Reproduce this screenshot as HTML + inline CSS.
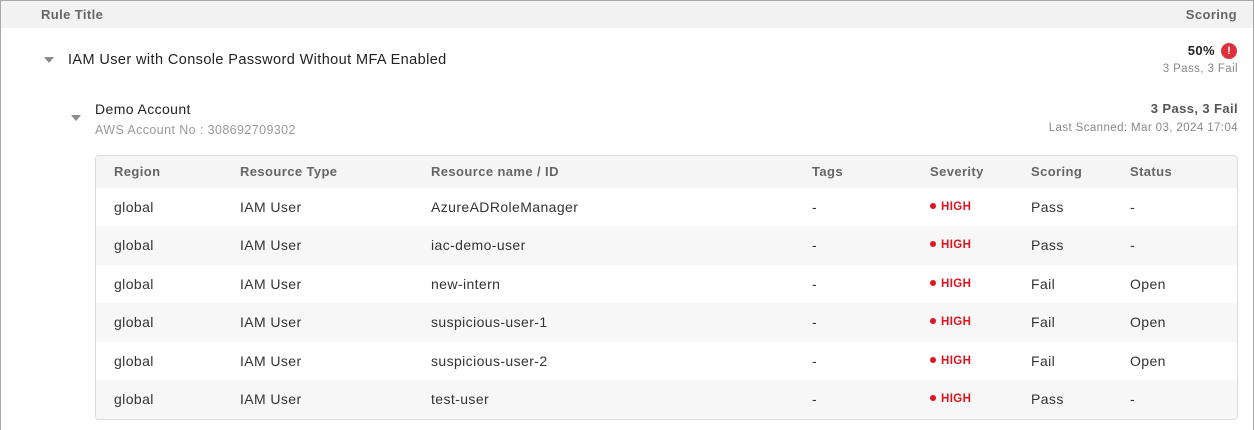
<!DOCTYPE html>
<html><head><style>
*{box-sizing:border-box;margin:0;padding:0}
body{width:1255px;height:430px;background:#fff;font-family:"Liberation Sans",sans-serif;color:#333;position:relative;overflow:hidden;letter-spacing:0.4px}
.frame{position:absolute;left:0;top:0;width:1254px;height:430px;border:1px solid #a8a8a8;border-bottom:none}
.hdr{position:absolute;left:1px;top:1px;width:1252px;height:27px;background:#f2f2f2}
.t{position:absolute;white-space:nowrap}
.tri{position:absolute;width:0;height:0;border-left:5px solid transparent;border-right:5px solid transparent;border-top:6px solid #8a8a8a}
.tbl{position:absolute;left:95px;top:155px;width:1143px;height:265px;border:1px solid #ddd;border-radius:4px;overflow:hidden}
.row{position:absolute;left:0;width:1141px;font-size:14px;color:#333}
.row span{position:absolute;white-space:nowrap}
.hi{color:#e0141e;font-weight:bold;font-size:11.5px}
.hi:before{content:"";display:inline-block;width:6px;height:6px;border-radius:50%;background:#e0141e;margin-right:5px;vertical-align:1px}
</style></head><body>
<div class="frame"></div>
<div class="hdr"></div>
<div class="t" style="left:41px;top:7px;font-size:13px;font-weight:bold;color:#666">Rule Title</div>
<div class="t" style="right:18px;top:7px;font-size:13px;font-weight:bold;color:#666">Scoring</div>
<div class="tri" style="left:44px;top:57px"></div>
<div class="t" style="left:68px;top:52px;font-size:14.5px;color:#222">IAM User with Console Password Without MFA Enabled</div>
<div class="t" style="right:40px;top:43px;font-size:13px;font-weight:bold;color:#222">50%</div>
<div style="position:absolute;left:1221px;top:43px;width:16px;height:16px;border-radius:50%;background:#e0303c;color:#fff;font-size:11px;font-weight:bold;text-align:center;line-height:16px;letter-spacing:0">!</div>
<div class="t" style="right:17px;top:63px;font-size:11.5px;color:#888">3 Pass, 3 Fail</div>
<div class="tri" style="left:71px;top:115px"></div>
<div class="t" style="left:95px;top:101px;font-size:14px;color:#222">Demo Account</div>
<div class="t" style="left:95px;top:123px;font-size:12.5px;color:#999">AWS Account No : 308692709302</div>
<div class="t" style="right:17px;top:101px;font-size:13px;font-weight:bold;color:#555">3 Pass, 3 Fail</div>
<div class="t" style="right:17px;top:122px;font-size:11.5px;color:#888">Last Scanned: Mar 03, 2024 17:04</div>
<div class="tbl">
<div class="row" style="top:0;height:32px;background:#f5f5f5;color:#666;font-weight:bold;font-size:13px"><span style="left:18px;top:8px">Region</span><span style="left:144px;top:8px">Resource Type</span><span style="left:335px;top:8px">Resource name / ID</span><span style="left:716px;top:8px">Tags</span><span style="left:834px;top:8px">Severity</span><span style="left:935px;top:8px">Scoring</span><span style="left:1034px;top:8px">Status</span></div>
<div class="row" style="top:32px;height:38px;background:#fff"><span style="left:18px;top:11px">global</span><span style="left:144px;top:11px">IAM User</span><span style="left:335px;top:11px">AzureADRoleManager</span><span style="left:716px;top:11px">-</span><span class="hi" style="left:834px;top:13px">HIGH</span><span style="left:935px;top:11px">Pass</span><span style="left:1034px;top:11px">-</span></div>
<div class="row" style="top:70px;height:39px;background:#f7f7f7"><span style="left:18px;top:11px">global</span><span style="left:144px;top:11px">IAM User</span><span style="left:335px;top:11px">iac-demo-user</span><span style="left:716px;top:11px">-</span><span class="hi" style="left:834px;top:13px">HIGH</span><span style="left:935px;top:11px">Pass</span><span style="left:1034px;top:11px">-</span></div>
<div class="row" style="top:109px;height:38px;background:#fff"><span style="left:18px;top:11px">global</span><span style="left:144px;top:11px">IAM User</span><span style="left:335px;top:11px">new-intern</span><span style="left:716px;top:11px">-</span><span class="hi" style="left:834px;top:13px">HIGH</span><span style="left:935px;top:11px">Fail</span><span style="left:1034px;top:11px">Open</span></div>
<div class="row" style="top:147px;height:39px;background:#f7f7f7"><span style="left:18px;top:11px">global</span><span style="left:144px;top:11px">IAM User</span><span style="left:335px;top:11px">suspicious-user-1</span><span style="left:716px;top:11px">-</span><span class="hi" style="left:834px;top:13px">HIGH</span><span style="left:935px;top:11px">Fail</span><span style="left:1034px;top:11px">Open</span></div>
<div class="row" style="top:186px;height:38px;background:#fff"><span style="left:18px;top:11px">global</span><span style="left:144px;top:11px">IAM User</span><span style="left:335px;top:11px">suspicious-user-2</span><span style="left:716px;top:11px">-</span><span class="hi" style="left:834px;top:13px">HIGH</span><span style="left:935px;top:11px">Fail</span><span style="left:1034px;top:11px">Open</span></div>
<div class="row" style="top:224px;height:40px;background:#f7f7f7"><span style="left:18px;top:11px">global</span><span style="left:144px;top:11px">IAM User</span><span style="left:335px;top:11px">test-user</span><span style="left:716px;top:11px">-</span><span class="hi" style="left:834px;top:13px">HIGH</span><span style="left:935px;top:11px">Pass</span><span style="left:1034px;top:11px">-</span></div>
</div>
</body></html>
